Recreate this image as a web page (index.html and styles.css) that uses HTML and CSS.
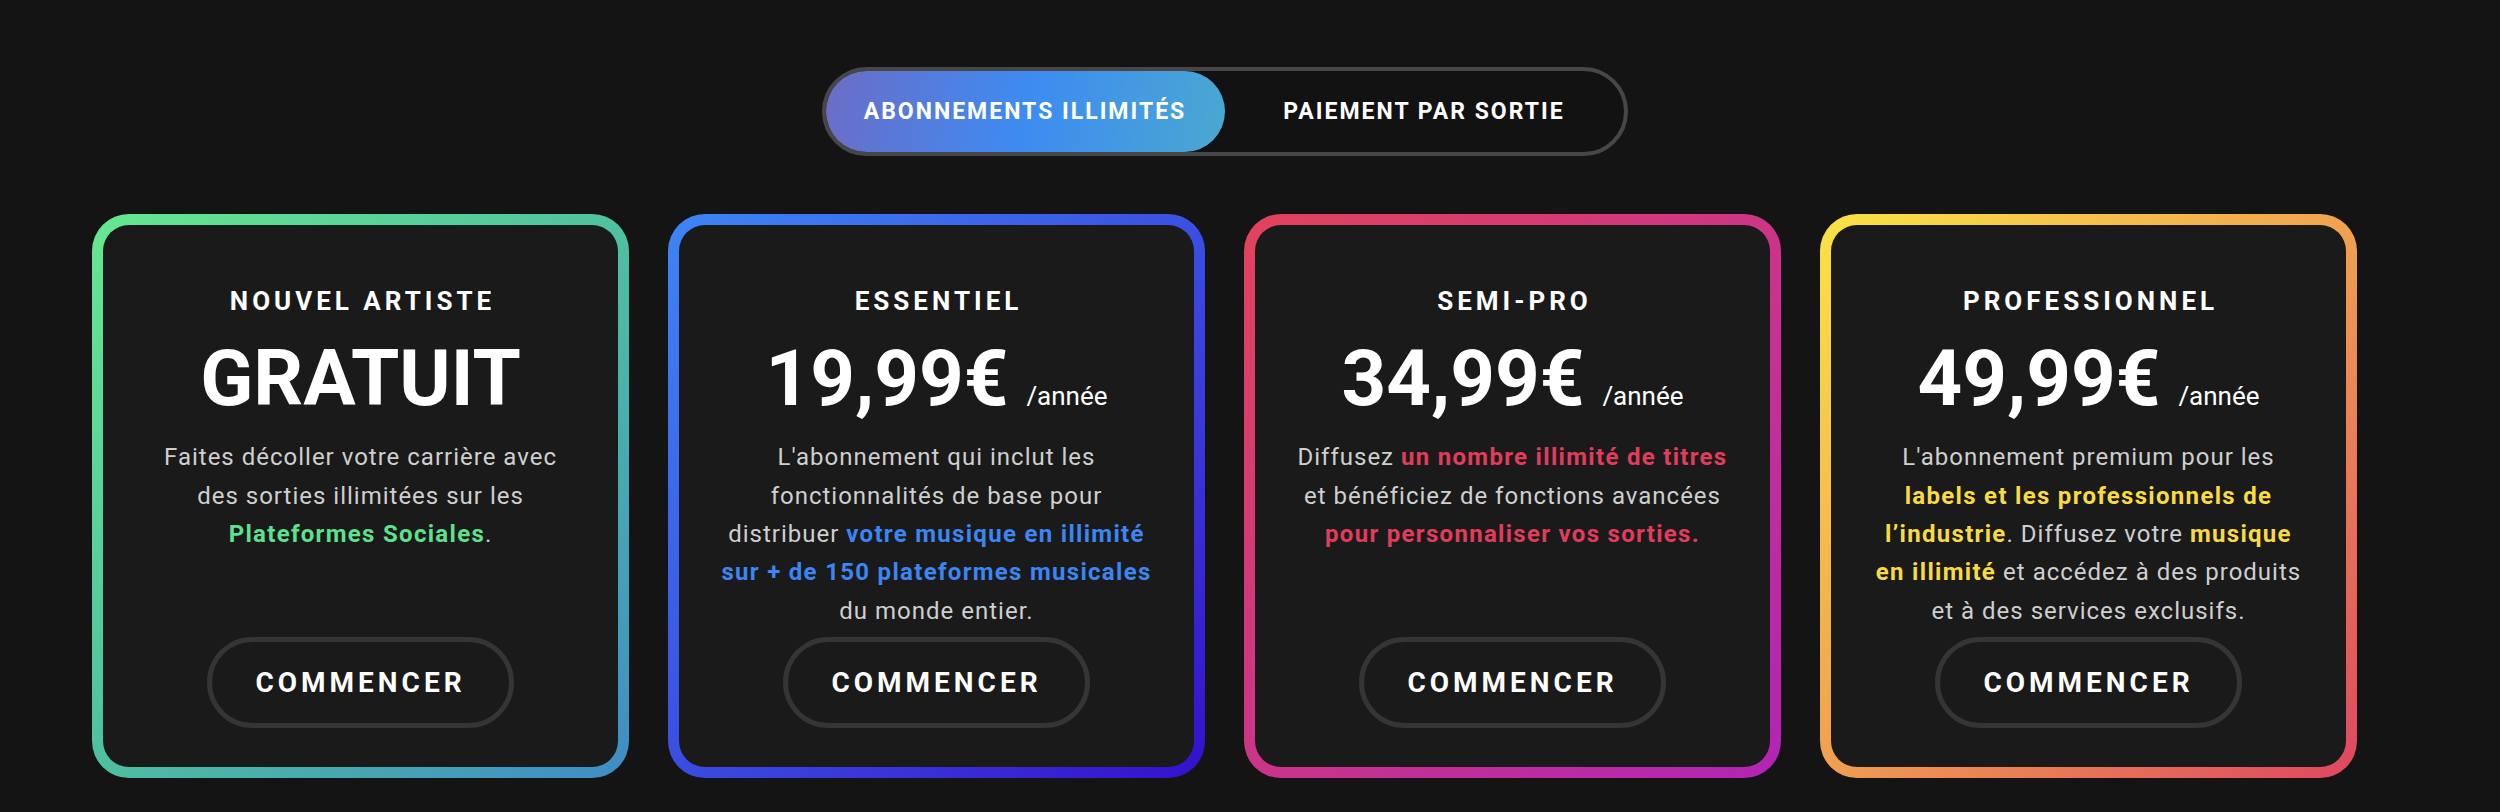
FILE: index.html
```html
<!DOCTYPE html>
<html lang="fr">
<head>
  <meta charset="UTF-8">
  <title>Tarifs - Distribution musicale</title>
  <link rel="stylesheet" href="styles.css">
</head>
<body>

  <main class="page">

    <div class="switch">
      <button type="button" class="switch-btn active">Abonnements illimités</button>
      <button type="button" class="switch-btn">Paiement par sortie</button>
    </div>

    <section class="plans">

      <div class="plan plan-new">
        <h3 class="plan-name">Nouvel artiste</h3>
        <div class="price">GRATUIT</div>
        <p class="desc">Faites décoller votre carrière avec des sorties illimitées sur les <strong class="hl-green">Plateformes Sociales</strong>.</p>
        <button type="button" class="start">Commencer</button>
      </div>

      <div class="plan plan-essential">
        <h3 class="plan-name">Essentiel</h3>
        <div class="price">19,99€<span class="per">/année</span></div>
        <p class="desc">L'abonnement qui inclut les fonctionnalités de base pour distribuer <strong class="hl-blue">votre musique en illimité sur + de 150 plateformes musicales</strong> du monde entier.</p>
        <button type="button" class="start">Commencer</button>
      </div>

      <div class="plan plan-semi">
        <h3 class="plan-name">Semi-pro</h3>
        <div class="price">34,99€<span class="per">/année</span></div>
        <p class="desc">Diffusez <strong class="hl-red">un nombre illimité de titres</strong> et bénéficiez de fonctions avancées <strong class="hl-red">pour personnaliser vos sorties.</strong></p>
        <button type="button" class="start">Commencer</button>
      </div>

      <div class="plan plan-pro">
        <h3 class="plan-name">Professionnel</h3>
        <div class="price">49,99€<span class="per">/année</span></div>
        <p class="desc">L'abonnement premium pour les <strong class="hl-yellow">labels et les professionnels de l’industrie</strong>. Diffusez votre <strong class="hl-yellow">musique en illimité</strong> et accédez à des produits et à des services exclusifs.</p>
        <button type="button" class="start">Commencer</button>
      </div>

    </section>

  </main>

</body>
</html>
```

FILE: styles.css
```css
body {
  margin: 0;
  background-color: #141414;
  color: #fff;
  font-family: Roboto, "Liberation Sans", Arial, sans-serif;
}
.page {
  display: flex;
  flex-direction: column;
  align-items: center;
  padding: 67px 51px 0 0;
}

/* toggle */
.switch {
  display: flex;
  border: 4px solid #474747;
  border-radius: 50px;
  background-color: #121212;
}
.switch-btn {
  width: 399px;
  height: 81px;
  border: 0;
  border-radius: 41px;
  background: transparent;
  color: #fff;
  font-family: Roboto, "Liberation Sans", sans-serif;
  font-size: 23px;
  font-weight: 700;
  letter-spacing: 2px;
  text-transform: uppercase;
  cursor: pointer;
}
.switch-btn.active {
  background: linear-gradient(100deg, #6c6dc6 0%, #3d8bf2 50%, #4aa8d0 100%);
}

/* cards */
.plans {
  display: grid;
  grid-template-columns: repeat(4, 537px);
  gap: 39px;
  margin-top: 58px;
}
.plan {
  display: flex;
  flex-direction: column;
  align-items: center;
  text-align: center;
  padding: 61px 40px 39px;
  border: 11px solid transparent;
  border-radius: 37px;
}
.plan-new {
  background: linear-gradient(#1a1a1a, #1a1a1a) padding-box,
              linear-gradient(135deg, #66e88f 0%, #4fc0a0 50%, #3e8cc6 100%) border-box;
}
.plan-essential {
  background: linear-gradient(#1a1a1a, #1a1a1a) padding-box,
              linear-gradient(135deg, #3d86f6 0%, #3b4ee2 50%, #3510cc 100%) border-box;
}
.plan-semi {
  background: linear-gradient(#1a1a1a, #1a1a1a) padding-box,
              linear-gradient(135deg, #e2435a 0%, #cc3488 50%, #b124b6 100%) border-box;
}
.plan-pro {
  background: linear-gradient(#1a1a1a, #1a1a1a) padding-box,
              linear-gradient(135deg, #fae346 0%, #f0a050 50%, #df4660 100%) border-box;
}
.plan-name {
  margin: 0 0 23px;
  padding-left: 4px;
  font-size: 26px;
  font-weight: 700;
  line-height: 1.2;
  letter-spacing: 4px;
  text-transform: uppercase;
}
.price {
  margin-bottom: 20px;
  font-size: 78px;
  font-weight: 700;
  line-height: 1;
}
.per {
  margin-left: 18px;
  font-size: 26px;
  font-weight: 400;
}
.desc {
  margin: 0 0 7px;
  font-size: 24px;
  line-height: 1.6;
  letter-spacing: 1px;
  color: #cfcfcf;
}
.desc strong {
  font-weight: 700;
  letter-spacing: 1.3px;
}
.hl-green { color: #5fe08c; }
.hl-blue { color: #3b86f3; }
.hl-red { color: #e03d5b; }
.hl-yellow { color: #f8da45; }

.start {
  margin-top: auto;
  width: 307px;
  height: 91px;
  border: 5px solid #353535;
  border-radius: 46px;
  background: transparent;
  color: #fff;
  font-family: Roboto, "Liberation Sans", sans-serif;
  font-size: 28px;
  font-weight: 700;
  letter-spacing: 4px;
  text-transform: uppercase;
  cursor: pointer;
}
```
